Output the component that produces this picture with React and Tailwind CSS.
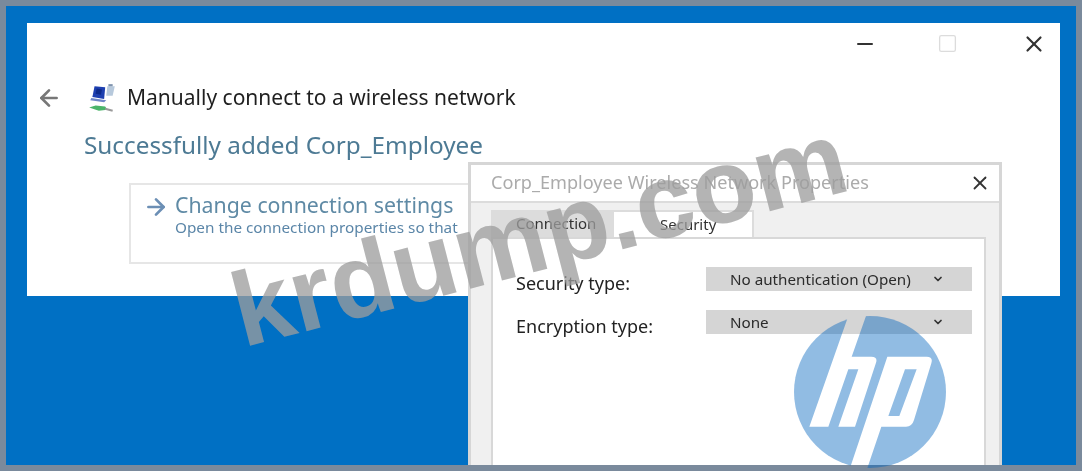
import { ArrowLeft, ArrowRight, ChevronDown, Minus, Square, X } from "lucide-react";

const sans = "font-['Noto_Sans','Open_Sans',sans-serif]";

function NetworkIcon() {
  return (
    <svg width="32" height="30" viewBox="0 0 30 28">
      <path d="M8 3 L18 4 L17 15 L6 13 Z" fill="#1d3fb0" />
      <path d="M10 5 L15 6 L14 11 L9 10 Z" fill="#0d2a8a" />
      <path d="M20 3 L27 3 L25 12 L19 12 Z" fill="#b7c9dc" />
      <path d="M21 1 L25 1 L25 3 L21 3 Z" fill="#7f93ad" />
      <path d="M5 14 L19 16 L17 18 L4 16 Z" fill="#6f86c8" />
      <path d="M3 23 L9 21 L18 22 L20 25 L12 26 Z" fill="#4bb56a" />
      <path d="M18 24 L25 26" stroke="#9a9a9a" strokeWidth="2" />
    </svg>
  );
}

function HpLogo() {
  return (
    <svg width="152" height="152" viewBox="-48 -12 456 456" className="absolute left-[794px] top-[316px]">
      <mask id="hp-cut">
        <rect x="-48" y="-12" width="456" height="456" fill="white" />
        <path d="M116 -15 H169 L125 110 H184 Q204 110 198 128 L135 320 H85 L145 148 H115 L55 320 H-2 Z" fill="black" />
        <path
          fillRule="evenodd"
          d="M232 110 H350 Q370 110 364 130 L312 300 Q306 320 288 320 H214 L170 450 H118 Z M285 148 H320 L268 288 H235 Z"
          fill="black"
        />
      </mask>
      <circle cx="180" cy="216" r="228" fill="#0064be" fillOpacity="0.43" mask="url(#hp-cut)" />
    </svg>
  );
}

function SelectRow({ label, value }) {
  return (
    <div className="flex items-center h-[24px]">
      <div className="w-[190px] pt-[8px] text-[18px] text-[#222] whitespace-nowrap">{label}</div>
      <div className="w-[266px] h-[24px] bg-[#d5d5d5] flex items-center justify-between pl-[24px] pr-[28px] text-[15.2px] text-[#2b2b2b]">
        <span>{value}</span>
        <ChevronDown size={12} strokeWidth={3.5} className="text-[#333]" />
      </div>
    </div>
  );
}

export default function App() {
  return (
    <div className={`relative w-[1082px] h-[471px] overflow-hidden bg-[#7a8a9c] p-[6px] blur-[0.4px] ${sans}`}>
      <div className="relative w-[1070px] h-[459px] overflow-hidden bg-[#0070c4] pt-[17px] pl-[21px]">
        {/* main window */}
        <div className="w-[1033px] h-[273px] bg-white">
          <div className="flex justify-end items-center h-[40px] pt-[1px] text-[#333]">
            <Minus size={24} strokeWidth={2} className="mr-[60px]" />
            <Square size={21} strokeWidth={1.5} className="text-[#dcdcdc] mr-[63px]" />
            <X size={26} strokeWidth={2} className="mr-[13px]" />
          </div>
          <div className="flex items-center h-[28px] mt-[21px] pl-[9px]">
            <ArrowLeft size={26} strokeWidth={2.5} className="text-[#777]" />
            <div className="ml-[24px]">
              <NetworkIcon />
            </div>
            <span className="ml-[9px] text-[21px] text-[#1f1f1f] whitespace-nowrap">Manually connect to a wireless network</span>
          </div>
          <div className="mt-[17px] ml-[57px] text-[24.3px] leading-[32px] text-[#4d7a94] whitespace-nowrap">Successfully added Corp_Employee</div>
          <div className="mt-[22px] ml-[102px] w-[700px] h-[81px] border-2 border-[#e6e6e6] flex pl-[12px] pt-[6px]">
            <ArrowRight size={26} strokeWidth={2.5} className="text-[#6c8fb5] mt-[3px]" />
            <div className="ml-[6px]">
              <div className="text-[21.3px] leading-[28px] text-[#5f8aa5] whitespace-nowrap">Change connection settings</div>
              <div className="text-[15.3px] leading-[17px] text-[#5b86a8] whitespace-nowrap">Open the connection properties so that</div>
            </div>
          </div>
        </div>

        {/* properties dialog */}
        <div className="absolute left-[462px] top-[156px] w-[534px] h-[320px] border-[3px] border-[#d6d6d6] bg-[#f0f0f0] flex flex-col">
          <div className="h-[38px] shrink-0 bg-white border-b-2 border-[#dcdcdc] flex items-center justify-between pl-[20px] pr-[8px]">
            <span className="text-[18.1px] text-[#ababab] whitespace-nowrap">Corp_Employee Wireless Network Properties</span>
            <X size={22} strokeWidth={2} className="text-[#333]" />
          </div>
          <div className="flex pl-[20px] pt-[7px] h-[34px] shrink-0">
            <div className="w-[121px] h-[27px] bg-[#dcdcdc] pl-[25px] text-[15px] leading-[27px] text-[#333]">Connection</div>
            <div className="w-[142px] h-[27px] bg-white border-2 border-b-0 border-[#dcdcdc] pl-[46px] text-[15px] leading-[25px] text-[#333]">Security</div>
          </div>
          <div className="ml-[20px] mr-[13px] flex-1 bg-white border-2 border-[#d8d8d8] pl-[23px] pt-[28px] flex flex-col gap-[19px]">
            <SelectRow label="Security type:" value="No authentication (Open)" />
            <SelectRow label="Encryption type:" value="None" />
          </div>
        </div>
      </div>

      <HpLogo />

      {/* watermark */}
      <div className="absolute left-[247px] top-[258px] origin-bottom-left -rotate-[14.5deg] font-['Liberation_Sans',sans-serif] font-bold text-[105px] leading-[105px] text-[#9d9d9dc2] whitespace-nowrap">
        krdump.com
      </div>
    </div>
  );
}
